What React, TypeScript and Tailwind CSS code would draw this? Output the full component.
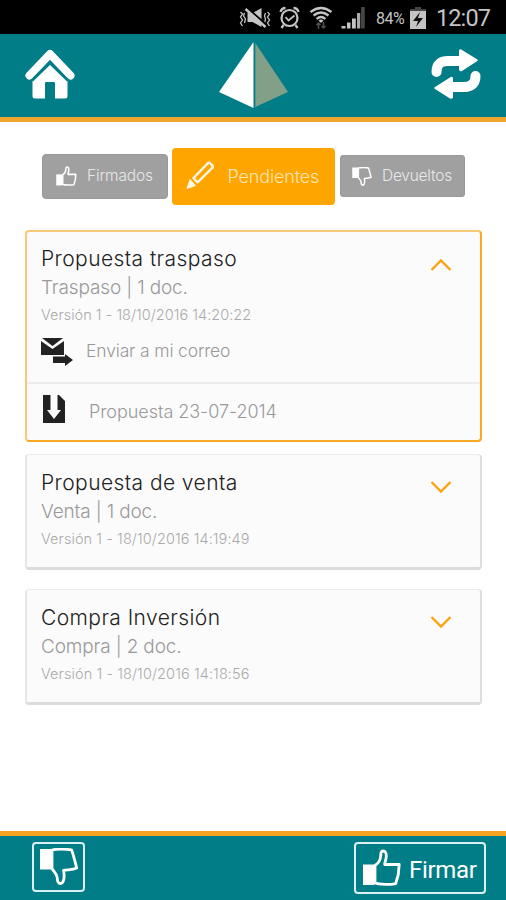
import { clsx } from "clsx";

const DOCS = [
  {
    title: "Propuesta traspaso",
    summary: "Traspaso | 1 doc.",
    version: "Versión 1 - 18/10/2016 14:20:22",
    versionClass: "tracking-[0.02px]",
    file: "Propuesta 23-07-2014",
  },
  {
    title: "Propuesta de venta",
    summary: "Venta | 1 doc.",
    version: "Versión 1 - 18/10/2016 14:19:49",
    versionClass: "tracking-[0.08px]",
  },
  {
    title: "Compra Inversión",
    summary: "Compra | 2 doc.",
    version: "Versión 1 - 18/10/2016 14:18:56",
    versionClass: "tracking-[0.09px]",
  },
];

function ThumbUp({ className }: { className?: string }) {
  return (
    <svg viewBox="0 0 38 37" className={className} fill="none" aria-hidden>
      <path d="M0 15.5h11.500v20.500H0z" fill="currentColor" />
      <path
        d="M12 16.500C15 14.500 17.500 11 17.700 7c0-3 .5-5 2.300-5 2.600 0 3.500 2.500 3.300 5.500-.2 3-1.300 5-1.600 8h14.500l-1 10.500-2.500 8.500c-3 1.400-17.500 1-20.700-.8z"
        stroke="currentColor"
        strokeWidth="2.800"
        strokeLinejoin="round"
      />
    </svg>
  );
}

function ThumbDown({ className }: { className?: string }) {
  return (
    <svg viewBox="0 0 38 37" className={className} fill="none" aria-hidden>
      <path d="M0 1h12v20.500H0z" fill="currentColor" />
      <path
        d="M12 2c4-.9 14-.9 19.500-.2 1 1.700 2.500 8 5.200 18.200-4 1.900-8 1.500-13.200 2.300.5 3 1 5 .4 8.500-.5 3-1.600 4.700-3.600 4.700-2.500 0-3-3-3.100-6C17 26 13.500 23.500 12 20.500z"
        stroke="currentColor"
        strokeWidth="2.800"
        strokeLinejoin="round"
      />
    </svg>
  );
}

function StatusBar() {
  return (
    <div className="flex h-[34px] items-center justify-end bg-black pr-[16px] font-[Roboto] text-[#c4c4c4]">
      <svg viewBox="0 0 126 28" className="mt-[2px] mr-[9px] h-[28px] w-[129px]" fill="none" stroke="currentColor" aria-hidden>
        {/* muted + vibrate */}
        <path d="M1 8l2 2-2 3 2 3-2 3 2 3M5 9l-1 3 2 3-1 4M28 8l2 2-2 3 2 3-2 3 2 3M26 9l-1 3 1 3-1 4" strokeWidth="1.300" />
        <path d="M8 9h5l9-5v19l-9-5H8z" fill="currentColor" stroke="none" />
        <path d="M8 4l18 16" stroke="#000" strokeWidth="2" />
        <path d="M6 5l20 18" strokeWidth="2.400" />
        {/* alarm */}
        <circle cx="50" cy="14" r="8" strokeWidth="2.200" />
        <path d="M46 13l3 3.500 6-5" strokeWidth="1.800" />
        <path d="M41 8q1-4 5-4M54 4q4 0 5 4M44 21l-2 3M56 21l2 3" strokeWidth="2.300" />
        {/* wifi */}
        <path d="M71 8q10.500-8 21 0M74 11.500q7.500-6 15 0M77 15q4.500-4 9 0" strokeWidth="2.300" />
        <path d="M79 16.500q2.500-2 5 0L81.500 19z" fill="currentColor" stroke="none" />
        <path d="M79 25v-6M77 21l2-2 2 2M84 18v6M82 22l2 2 2-2" stroke="#505050" strokeWidth="1.500" />
        {/* signal */}
        <path d="M102 24.500v-2.500h4v2.500zM107.500 24.500v-6h3.500v6zM112.500 24.500v-10h3.800v10z" fill="currentColor" stroke="none" />
        <path d="M117.500 24.500V9h3.200v15.500z" fill="#aaa" stroke="none" />
        <path d="M121.500 24.500V3h3.800v21.500z" fill="#444" stroke="none" />
      </svg>
      <span className="mt-[3px] w-[31px] text-[16px] tracking-[-0.500px]">84%</span>
      <svg viewBox="0 0 16 22" className="mt-[1px] ml-[3px] h-[22px] w-[16px]" aria-hidden>
        <path d="M5 0h6v2h5v3H0V2h5z" fill="#444" />
        <path d="M0 4h16v18H0z" fill="currentColor" />
        <path d="M10 5l-7 9h5l-2 6 7-9H8z" fill="#111" />
      </svg>
      <span className="mt-[4px] ml-[10px] w-[54px] text-[23.500px] leading-none tracking-[-0.900px]">12:07</span>
    </div>
  );
}

function Header() {
  return (
    <header className="flex h-[88px] justify-between border-b-[5px] border-[#f0a62a] bg-[#007d87] px-[25px] text-white">
      <svg viewBox="0 0 50 50" className="mt-[15px] h-[50px] w-[50px]" fill="currentColor" aria-hidden>
        <path d="M4.500 26.500L25 5l20.500 21.500" fill="none" stroke="currentColor" strokeWidth="8" strokeLinecap="round" strokeLinejoin="round" />
        <path d="M7.500 31L25 14l17.500 17v16q0 2.500-2.500 2.500H30V34q0-1-1-1h-8q-1 0-1 1v15.500H10Q7.500 49.500 7.500 47z" />
        <path d="M7 31.500L25 14 43 31.500" fill="none" stroke="#007d87" strokeWidth="2.800" />
      </svg>
      <svg viewBox="0 0 70 66" className="mt-[8px] ml-[2px] h-[66px] w-[70px]" aria-hidden>
        <path d="M34.500 0v66L0 50z" fill="#fff" />
        <path d="M36.300 1L69 50 36.300 65z" fill="#829f88" />
      </svg>
      <svg viewBox="0 0 50 50" className="mt-[15px] h-[50px] w-[50px]" fill="currentColor" aria-hidden>
        <path d="M5.500 23C5.500 14 11 12 17 12h13M44.500 27c0 9-6 11-12 11H20" fill="none" stroke="currentColor" strokeWidth="10" strokeLinecap="round" />
        <path d="M28 1.500q1-2 3-.5l15 9.300q1.500 1 0 2L31 22q-2 1-3-1zM22 29q-1-2-3-.5L4 38q-1.500 1 0 2l15 9.500q2 1 3-1z" />
      </svg>
    </header>
  );
}

function Tabs() {
  return (
    <div className="mt-[26px] flex h-[57px] items-center pl-[42px] font-light text-[#e8e8e8]">
      <button className="flex h-[45px] w-[126px] items-center rounded-[4px] border border-[#989898] bg-[#a0a0a0] pl-[13px] text-[15.500px] tracking-[-0.150px]">
        <ThumbUp className="mb-[2px] h-[20px] w-[21px] text-white" />
        <span className="mb-[1px] ml-[10px]">Firmados</span>
      </button>
      <button className="ml-[4px] flex h-[57px] w-[163px] items-center rounded-[4px] bg-[#ffa500] pl-[14px] text-[18px] tracking-[-0.150px] text-[#ffe6b0]">
        <svg viewBox="0 0 28 28" className="mb-[4px] h-[28px] w-[28px] text-[#fff7e3]" fill="none" aria-hidden>
          <path d="M7.500 17L22 2.200q1-1 2 0l2.500 2.500q1 1 0 2L11.500 21.500z" stroke="currentColor" strokeWidth="2.400" strokeLinejoin="round" />
          <path d="M4 18.500L9.500 24.500 1 27.500z" fill="currentColor" stroke="currentColor" strokeLinejoin="round" />
        </svg>
        <span className="ml-[13.500px]">Pendientes</span>
      </button>
      <button className="mb-[1px] ml-[5px] flex h-[42px] w-[125px] items-center rounded-[3px] border border-[#989898] bg-[#a0a0a0] pl-[11px] text-[15.500px] tracking-[-0.250px]">
        <ThumbDown className="h-[19px] w-[20px] text-white" />
        <span className="ml-[10px]">Devueltos</span>
      </button>
    </div>
  );
}

function Chevron({ up }: { up?: boolean }) {
  return (
    <svg viewBox="0 0 22 14" className={clsx("mr-[28px] h-[14px] w-[22px]", up ? "mt-[26px] rotate-180" : "mt-[25px]")} fill="none" aria-hidden>
      <path d="M1.500 2L11 11.500 20.500 2" stroke="#fca311" strokeWidth="2.400" />
    </svg>
  );
}

function DocCard({ doc }: { doc: (typeof DOCS)[number] }) {
  const open = Boolean(doc.file);
  return (
    <article
      className={clsx(
        "w-[457px] rounded-[4px] bg-[#fbfbfb] font-light",
        open
          ? "h-[212px] border-[2px] border-t-[#fbc878] border-r-[#fba922] border-b-[#fba922] border-l-[#fbc878]"
          : "h-[116px] border-t border-r-[2px] border-b-[3px] border-l-[2px] border-t-[#ebebeb] border-r-[#dedede] border-b-[#dcdcdc] border-l-[#e6e6e6]",
      )}
    >
      <div className={clsx("flex justify-between", open ? "h-[98px]" : "h-[112px]")}>
        <div className={clsx("pl-[14px] whitespace-nowrap", open ? "pt-[12px]" : "pt-[13px]")}>
          <h2 className="text-[21px] leading-[30px] font-[350] tracking-[0.420px] text-[#222]">{doc.title}</h2>
          <p className="text-[19px] leading-[28px] tracking-[-0.150px] text-[#999]">{doc.summary}</p>
          <p className={clsx("text-[14.500px] leading-[25px] text-[#aaa]", doc.versionClass)}>{doc.version}</p>
        </div>
        <Chevron up={open} />
      </div>
      {open && (
        <>
          <div className="flex h-[54px] items-center border-b-[2px] border-[#ececec] pl-[13px] text-[17.500px] tracking-[-0.150px] text-[#999]">
            <svg viewBox="0 0 33 28" className="mb-[8px] h-[28px] w-[33px]" fill="#222" aria-hidden>
              <path d="M2 0h21L12.500 8z" />
              <path d="M1 3l11.500 8L24 3v14H1z" />
              <path d="M13 18.500h12v-2.500l8 6-8 6v-3H13z" />
            </svg>
            <span className="mb-[8px] ml-[13px]">Enviar a mi correo</span>
          </div>
          <div className="flex h-[56px] items-center pl-[16px] text-[18px] tracking-[-0.050px] text-[#999]">
            <svg viewBox="0 0 22 28" className="mb-[5px] h-[28px] w-[22px]" aria-hidden>
              <path d="M0 0h16l6 6v22H0z" fill="#222" />
              <path d="M7.500 0h7v15h3.500L11 24 4 15h3.500z" fill="#fbfbfb" />
            </svg>
            <span className="mb-[1px] ml-[24px]">{doc.file}</span>
          </div>
        </>
      )}
    </article>
  );
}

function Footer() {
  return (
    <footer className="flex h-[69px] items-start justify-between border-t-[5px] border-[#f5a21c] bg-[#007d87] pr-[20px] pl-[32px] text-white">
      <button className="mt-[6px] flex h-[50px] w-[53px] justify-center rounded-[4px] border-[2px] border-[#d9f1f2] pt-[4px]">
        <ThumbDown className="h-[37px] w-[38px]" />
      </button>
      <button className="mt-[6px] flex h-[52px] w-[132px] items-center rounded-[4px] border-[2px] border-[#d9f1f2] pl-[7px]">
        <ThumbUp className="mb-[2px] h-[37px] w-[38px]" />
        <span className="mt-[3px] ml-[8px] font-[Roboto] text-[24px] tracking-[-0.300px]">Firmar</span>
      </button>
    </footer>
  );
}

export default function App() {
  return (
    <div className="flex h-[900px] w-[506px] flex-col overflow-hidden bg-white font-[Inter,sans-serif]">
      <StatusBar />
      <Header />
      <main className="flex-1">
        <Tabs />
        <div className="mt-[24.500px] flex flex-col pl-[25px]">
          <DocCard doc={DOCS[0]} />
          <div className="mt-[12px] flex flex-col gap-[19px]">
            <DocCard doc={DOCS[1]} />
            <DocCard doc={DOCS[2]} />
          </div>
        </div>
      </main>
      <Footer />
    </div>
  );
}
